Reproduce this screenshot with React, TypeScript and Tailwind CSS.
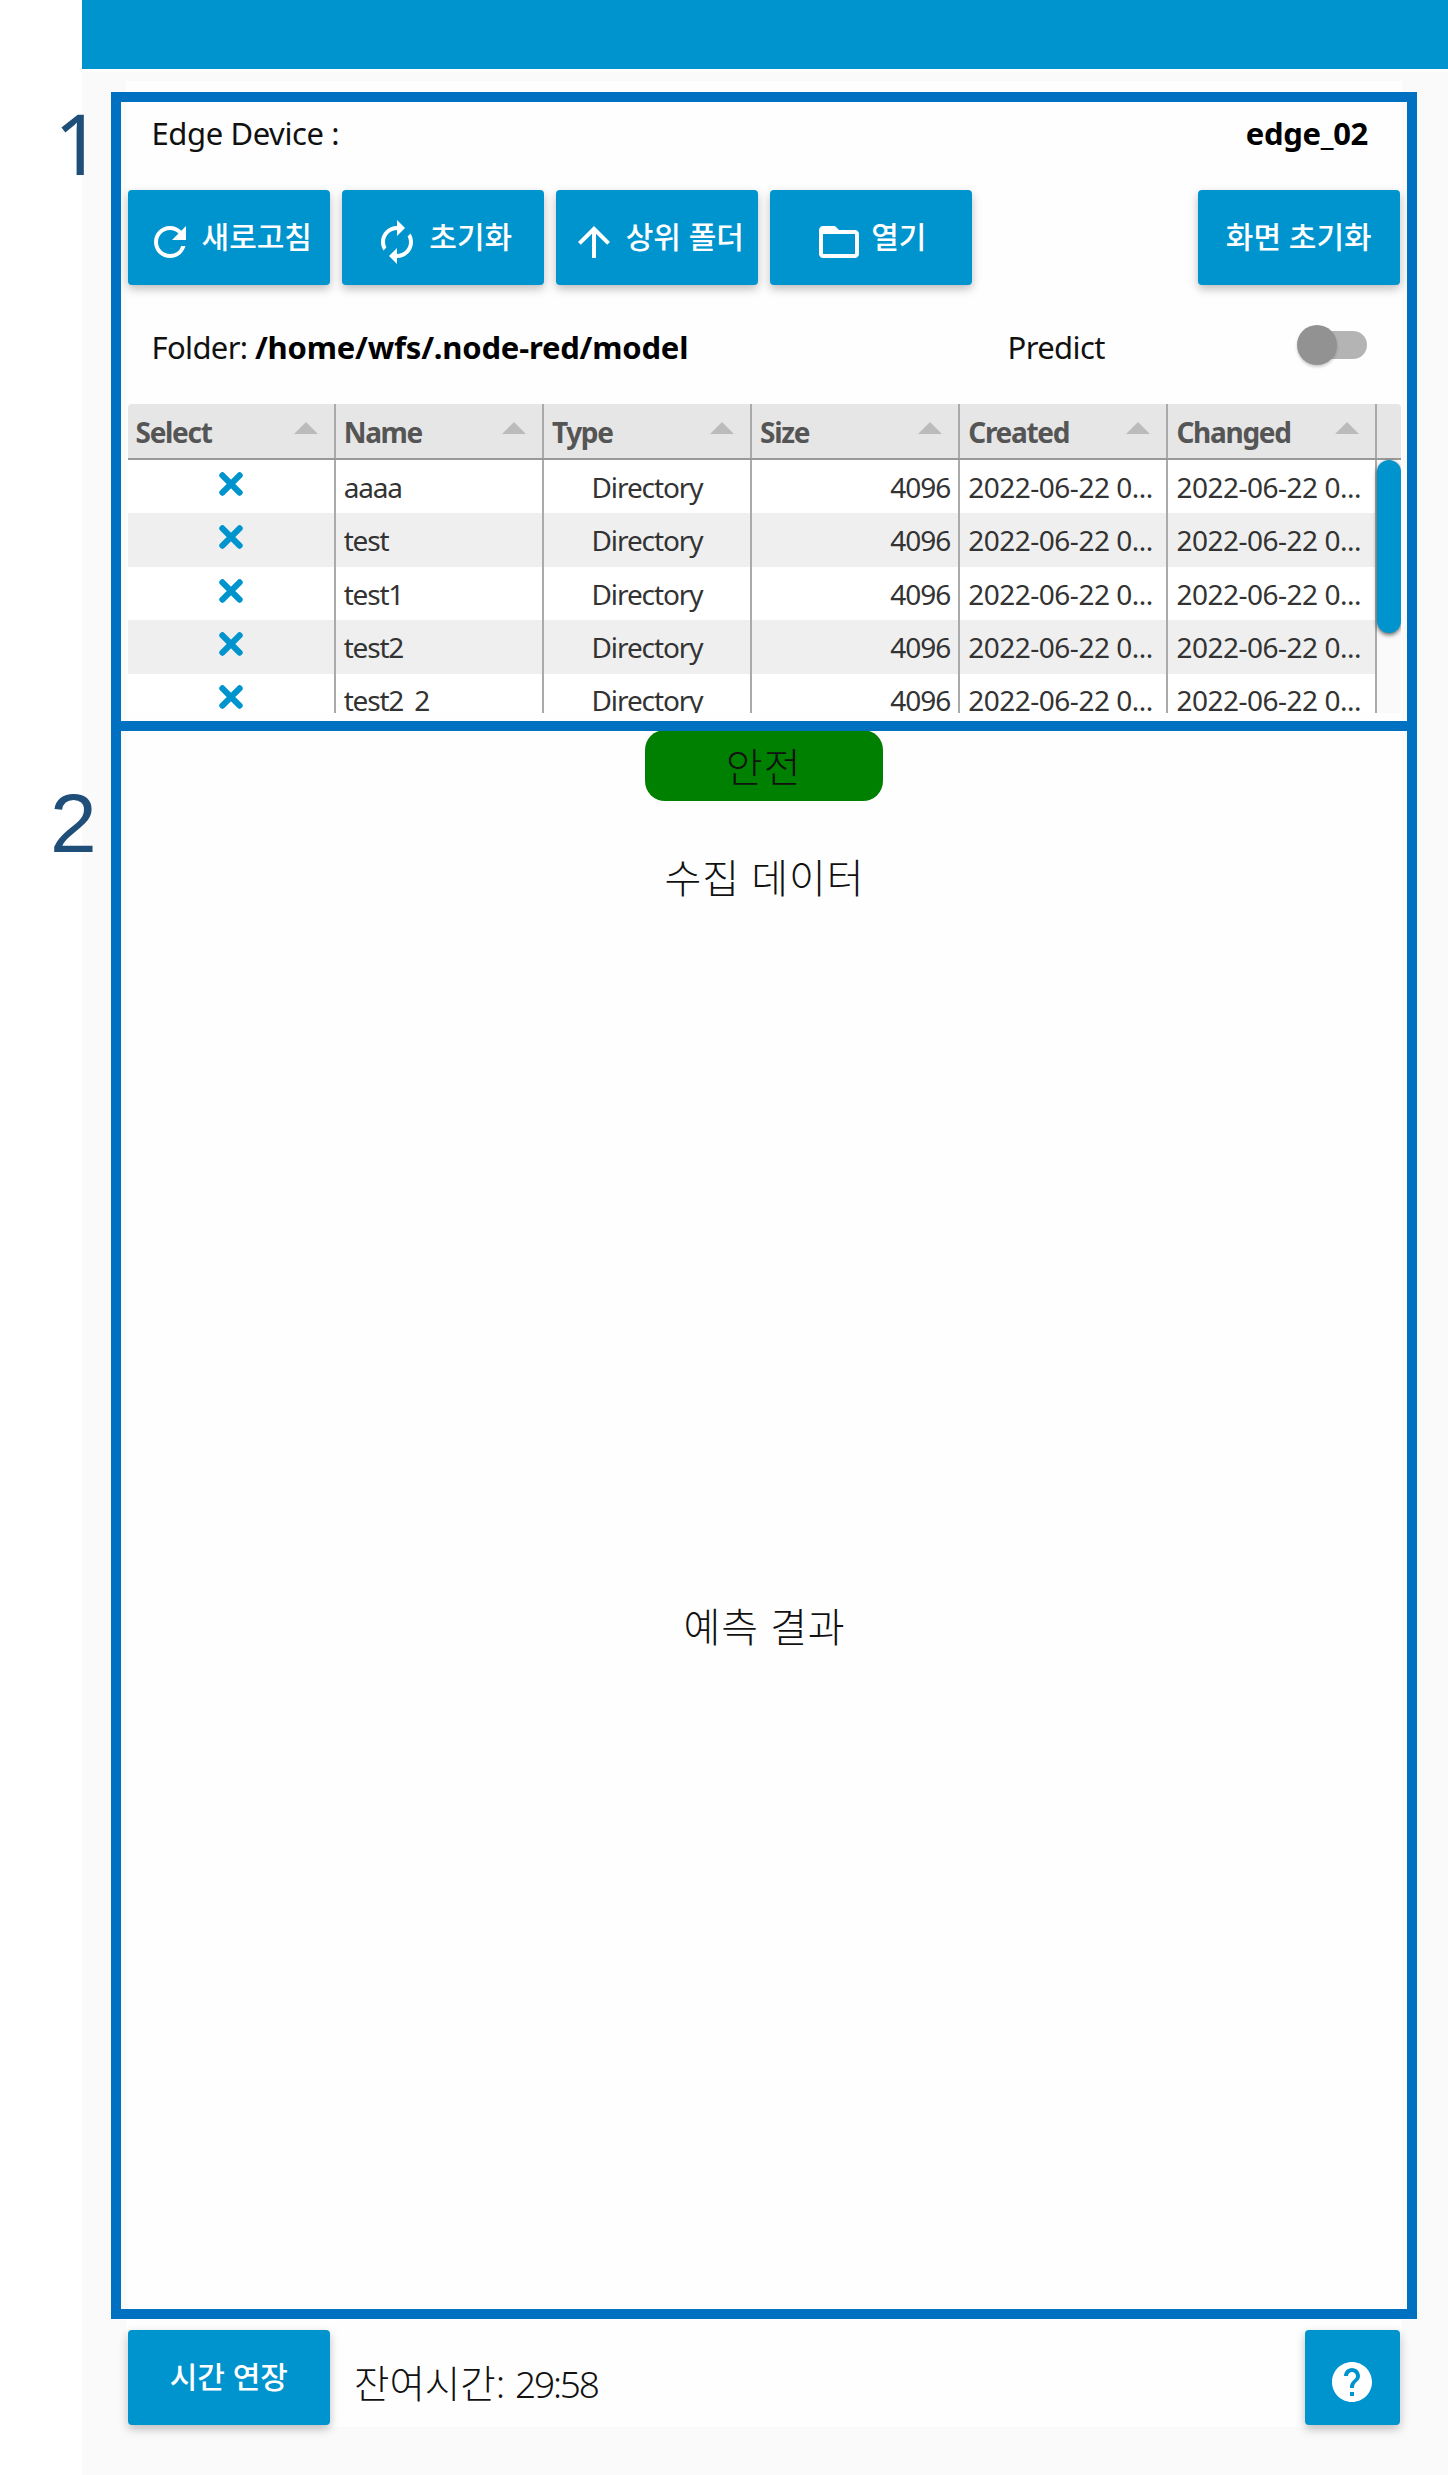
import type { ReactNode } from "react";
import { MdArrowUpward, MdAutorenew, MdFolderOpen, MdHelp, MdRefresh } from "react-icons/md";

const columns = ["Select", "Name", "Type", "Size", "Created", "Changed"];
const names = ["aaaa", "test", "test1", "test2", "test2_2"];

function ActionButton({ children, className = "w-[202.5px]" }: { children: ReactNode; className?: string }) {
  return (
    <button
      className={`${className} flex h-[95.5px] shrink-0 items-center justify-center gap-2 rounded-[4px] bg-[#0094ce] pb-[2px] text-[30px] leading-none font-medium whitespace-nowrap text-white shadow-[0_4px_10px_rgba(0,0,0,0.26)]`}
    >
      {children}
    </button>
  );
}

function SelectMark() {
  return (
    <svg viewBox="0 0 24 24" className="size-6" fill="none" stroke="#0094ce" strokeWidth="6.2" strokeLinecap="round">
      <path d="M3.4 3.4 20.6 20.6M20.6 3.4 3.4 20.6" />
    </svg>
  );
}

function FileTable() {
  const cell = "flex h-full w-[208.2px] shrink-0 items-center border-r-2 border-[#aaa] px-2";
  return (
    <div className="h-[309px] w-[1273px] overflow-hidden text-[28px] leading-none">
      <div className="flex h-[56px] rounded-t-[4px] border-b-2 border-[#999] bg-[#e6e6e6] font-bold text-[#555]">
        {columns.map((c) => (
          <div key={c} className={`${cell} justify-between pr-[16px]`}>
            <span className="pt-[2px] tracking-[-1.3px]">{c}</span>
            <svg viewBox="0 0 24 12" className="mb-[6px] h-3 w-6">
              <path d="M12 0 24 12H0z" fill="#bbb" />
            </svg>
          </div>
        ))}
      </div>
      <div className="flex h-[253px]">
        <div className="w-[1249.2px] shrink-0 overflow-hidden text-[#333]">
          {names.map((name) => (
            <div key={name} className="flex h-[53.45px] bg-white even:bg-[#efefef]">
              <div className={`${cell} justify-center pb-[6px]`}>
                <SelectMark />
              </div>
              <div className={`${cell} tracking-[-1.2px]`}>{name}</div>
              <div className={`${cell} justify-center tracking-[-1.1px]`}>Directory</div>
              <div className={`${cell} justify-end tracking-[-1px]`}>4096</div>
              <div className={`${cell} tracking-[-0.5px]`}>2022-06-22 0...</div>
              <div className={`${cell} tracking-[-0.5px]`}>2022-06-22 0...</div>
            </div>
          ))}
        </div>
        <div className="grow bg-[#fafafa]">
          <div className="h-[173px] rounded-full bg-[#0094ce] shadow-[0_2px_4px_rgba(0,0,0,0.6)]" />
        </div>
      </div>
    </div>
  );
}

export default function App() {
  return (
    <div className="relative flex h-[2475px] w-[1448px] overflow-hidden bg-white font-['Noto_Sans','Noto_Sans_CJK_KR',sans-serif] text-[#111]">
      <div className="w-[82px] shrink-0" />
      <div className="flex grow flex-col">
        <header className="h-[69.3px] shrink-0 bg-[#0094ce]" />
        <main className="mt-[2.7px] grow bg-[#fafafa] pt-[9px] pl-[43.5px]">
          <div className="flex h-[2346px] w-[1276.5px] flex-col bg-[#fefefe] px-[2px]">
            <div className="flex h-[109px] items-center justify-between pr-[32px] pb-[4px] pl-[24px] text-[31px] leading-none">
              <span className="tracking-[-0.4px]">Edge Device :</span>
              <span className="font-bold tracking-[-0.3px] text-black">edge_02</span>
            </div>
            <div className="flex h-[95.5px] gap-[11.5px]">
              <ActionButton>
                <MdRefresh className="mt-[10px] size-12" />
                새로고침
              </ActionButton>
              <ActionButton>
                <MdAutorenew className="mt-[10px] size-12" />
                초기화
              </ActionButton>
              <ActionButton>
                <MdArrowUpward className="mt-[10px] size-12" />
                상위 폴더
              </ActionButton>
              <ActionButton>
                <MdFolderOpen className="mt-[10px] size-12" />
                열기
              </ActionButton>
              <div className="grow" />
              <ActionButton>화면 초기화</ActionButton>
            </div>
            <div className="flex h-[118.5px] items-center pr-[33px] pl-[24px] text-[31px] leading-none">
              <div className="w-[856px] pt-[5px] whitespace-nowrap">
                <span className="tracking-[-0.65px]">Folder: </span>
                <span className="font-bold tracking-[-0.2px] text-black">/home/wfs/.node-red/model</span>
              </div>
              <span className="grow pt-[5px] tracking-[-0.6px]">Predict</span>
              <div className="relative flex h-10 w-[70px] items-center">
                <div className="ml-2 h-7 grow rounded-full bg-[#b4b4b4]" />
                <div className="absolute left-0 size-10 rounded-full bg-[#929292] shadow-[0_2px_3px_rgba(0,0,0,0.2)]" />
              </div>
            </div>
            <FileTable />
            <div className="mt-[17px] flex h-[71px] w-[238px] items-center justify-center self-center rounded-[20px] bg-[#008000] pt-1 text-[40px] leading-none font-light tracking-[1.2px]">
              안전
            </div>
            <div className="mt-[57px] self-center pl-[1.5px] text-[40px] leading-[40px] font-light tracking-[0.9px]">수집 데이터</div>
            <div className="mt-[709px] self-center pl-[1.5px] text-[40px] leading-[40px] font-light tracking-[0.9px]">예측 결과</div>
            <div className="mt-auto mb-[1.5px] flex items-center">
              <ActionButton>시간 연장</ActionButton>
              <div className="mt-[12px] ml-[24px] flex grow items-baseline leading-none">
                <span className="text-[38.5px] leading-none font-light">잔여시간:</span>
                <span className="ml-[10px] text-[37px] leading-none font-light tracking-[-2.2px]">29:58</span>
              </div>
              <ActionButton className="w-[95.5px]">
                <MdHelp className="mt-[10px] size-12" />
              </ActionButton>
            </div>
          </div>
        </main>
      </div>

      {/* Callout frames and their numbers */}
      <div className="pointer-events-none absolute top-[92px] left-[111px] h-[639px] w-[1306px] border-[10px] border-[#0070c0]" />
      <div className="pointer-events-none absolute top-[721px] left-[111px] h-[1598px] w-[1306px] border-[10px] border-[#0070c0]" />
      <span className="absolute top-[101px] left-[54px] font-['Noto_Sans',sans-serif] text-[84px] leading-[84px] text-[#1f4e79]">1</span>
      <span className="absolute top-[781px] left-[50px] font-['Liberation_Sans',sans-serif] text-[84px] leading-[84px] text-[#1f4e79]">2</span>
    </div>
  );
}
